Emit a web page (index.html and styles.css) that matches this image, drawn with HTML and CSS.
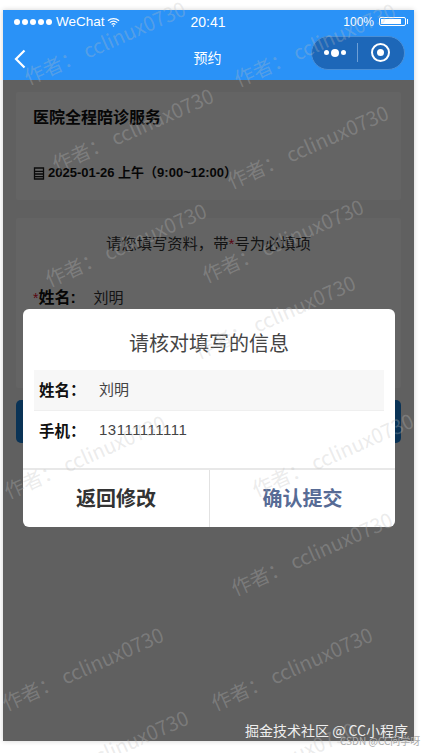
FILE: index.html
```html
<!DOCTYPE html>
<html lang="zh">
<head>
<meta charset="utf-8">
<title>预约</title>
<link rel="stylesheet" href="styles.css">
</head>
<body>
<div class="stage">
  <div class="phone">
    <div class="header">
      <div class="status">
        <div class="status-left">
          <span class="dots"><i></i><i></i><i></i><i></i><i></i></span>
          <span>WeChat</span>
          <svg class="wifi" viewBox="0 0 14 10" width="13" height="10"><path d="M1 3.600C4.400.6 9.600.6 13 3.600M3 5.700c2.300-2 5.700-2 8 0M5 7.700c1.200-1 2.800-1 4 0" fill="none" stroke="#fff" stroke-width="1.300"/><circle cx="7" cy="9.200" r=".8" fill="#fff"/></svg>
        </div>
        <div class="status-time">20:41</div>
        <div class="status-right">
          <span>100%</span>
          <span class="battery"><b></b></span>
        </div>
      </div>
      <div class="nav">
        <svg class="back" viewBox="0 0 12 20" width="12" height="20"><path d="M10.500 1.500 2 10l8.500 8.500" fill="none" stroke="#fff" stroke-width="2.200"/></svg>
        <div class="nav-title">预约</div>
        <div class="capsule">
          <span class="more"><i></i><i class="mid"></i><i></i></span>
          <span class="cap-line"></span>
          <span class="target"><i></i></span>
        </div>
      </div>
    </div>
    <div class="content">
      <div class="card service">
        <div class="service-title">医院全程陪诊服务</div>
        <div class="service-date">
          <svg viewBox="0 0 12 13" width="12" height="13"><path d="M1.500 1h9v11h-9zM1.500 4.300h9M1.500 7h9M1.500 9.600h9" fill="none" stroke="#1a1a1a" stroke-width="1.300"/></svg>
          <span>2025-01-26 上午（9:00~12:00）</span>
        </div>
      </div>
      <div class="card form">
        <div class="form-tip">请您填写资料，带<em>*</em>号为必填项</div>
        <div class="form-row"><em>*</em><strong>姓名:</strong><span>刘明</span></div>
      </div>
      <div class="submit"></div>
      <div class="mask"></div>
      <div class="modal">
        <div class="modal-title">请核对填写的信息</div>
        <div class="modal-rows">
          <div class="modal-row shaded"><strong>姓名：</strong><span>刘明</span></div>
          <div class="modal-row"><strong>手机：</strong><span class="phone-num">13111111111</span></div>
        </div>
        <div class="modal-foot">
          <div class="modal-btn">返回修改</div>
          <div class="modal-btn ok">确认提交</div>
        </div>
      </div>
    </div>
  </div>
  <div class="wm w1">作者： cclinux0730</div>
  <div class="wm w2">作者： cclinux0730</div>
  <div class="wm w3">作者： cclinux0730</div>
  <div class="wm w4">作者： cclinux0730</div>
  <div class="wm w5">作者： cclinux0730</div>
  <div class="wm w6">作者： cclinux0730</div>
  <div class="wm w7">作者： cclinux0730</div>
  <div class="wm w8">作者： cclinux0730</div>
  <div class="wm w9">作者： cclinux0730</div>
  <div class="wm w10">作者： cclinux0730</div>
  <div class="wm w11">作者： cclinux0730</div>
  <div class="wm w12">作者： cclinux0730</div>
  <div class="wm w13">作者： cclinux0730</div>
  <div class="wm w14">作者： cclinux0730</div>
  <div class="credit">掘金技术社区 @ CC小程序</div>
  <div class="credit2">CSDN @CC问学呀</div>
</div>
</body>
</html>
```
FILE: styles.css
```css
* { box-sizing: border-box; }
html, body { margin: 0; padding: 0; background: #fff; }
body { font-family: "Liberation Sans", "Noto Sans CJK SC", sans-serif; }
.stage { position: relative; width: 423px; height: 753px; overflow: hidden; padding: 10px 9px 12px 3px; }
.phone { width: 411px; height: 731px; display: flex; flex-direction: column; box-shadow: 0 0 5px rgba(0,0,0,.18); }

.header { height: 70px; background: #2a92f7; color: #fff; flex: none; }
.status { height: 22px; display: grid; grid-template-columns: 1fr auto 1fr; align-items: center; padding: 1px 8px 0 11px; font-size: 13.500px; }
.status-left { display: flex; align-items: center; gap: 2px; }
.dots { display: flex; gap: 2px; margin-right: 2px; }
.dots i { width: 6px; height: 6px; border-radius: 50%; background: #fff; }
.status-time { font-size: 14px; padding-right: 4px; }
.status-right { display: flex; justify-content: flex-end; align-items: center; gap: 5px; font-size: 12px; }
.battery { width: 27px; height: 9px; border: 1px solid #fff; border-radius: 2px; padding: 1px; position: relative; }
.battery b { display: block; height: 100%; width: 85%; background: #fff; }
.battery::after { content: ""; position: absolute; right: -3px; top: 1px; width: 1px; height: 5px; background: #fff; }
.nav { height: 48px; display: grid; grid-template-columns: 1fr auto 1fr; align-items: center; padding: 0 9px 0 11px; }
.back { display: block; margin-top: 5px; }
.nav-title { font-size: 14px; padding-top: 2px; padding-right: 4px; }
.capsule { justify-self: end; width: 94px; height: 34px; border-radius: 17px; background: #1d67b8; border: 1px solid #4a8fd6; display: flex; align-items: center; margin-top: -7px; }
.more { display: flex; align-items: center; gap: 2px; width: 45px; justify-content: center; }
.more i { width: 5px; height: 5px; border-radius: 50%; background: #fff; }
.more i.mid { width: 8px; height: 8px; }
.cap-line { width: 1px; height: 19px; background: #6d9fd6; }
.target { width: 19px; height: 19px; border: 2px solid #fff; border-radius: 50%; margin-left: 13px; display: flex; align-items: center; justify-content: center; }
.target i { width: 7px; height: 7px; border-radius: 50%; background: #fff; }

.content { position: relative; flex: 1; background: #f1f1f1; padding: 12px 13px 0; }
.card { background: #fafafa; border-radius: 3px; }
.service { height: 108px; padding: 15px 17px 0; color: #111; }
.service-title { font-size: 16px; font-weight: 700; line-height: 22px; }
.service-date { display: flex; align-items: center; gap: 3px; margin-top: 35px; font-size: 13px; font-weight: 700; line-height: 18px; }
.service-date svg { flex: none; }
.form { height: 170px; margin-top: 18px; padding: 16px 17px 0; }
.form-tip { text-align: center; font-size: 15.300px; line-height: 20px; color: #333; }
.form-tip em, .form-row em { font-style: normal; color: #e01030; }
.form-row { margin-top: 33px; display: flex; align-items: baseline; font-size: 16px; color: #333; line-height: 22px; }
.form-row em { font-size: 14px; }
.form-row strong { color: #111; width: 55px; }
.form-row span { font-size: 15px; }
.submit { height: 43px; margin-top: 12px; background: #1a7fd8; border-radius: 5px; }

.mask { position: absolute; inset: 0; background: rgba(0,0,0,.6); }
.modal { position: absolute; left: 20px; top: 229px; width: 372px; height: 218px; background: #fff; border-radius: 6px; display: flex; flex-direction: column; }
.modal-title { height: 61px; display: flex; align-items: center; justify-content: center; font-size: 20px; color: #444; padding-top: 6px; }
.modal-rows { margin: 0 11px; height: 98px; }
.modal-row { height: 40px; display: flex; align-items: center; padding: 0 0 3px 5px; font-size: 15px; color: #444; }
.modal-row.shaded { height: 41px; background: #f7f7f7; border-bottom: 1px solid #efefef; }
.modal-row strong { width: 60px; color: #111; font-size: 15.500px; }
.phone-num { letter-spacing: .5px; }
.modal-foot { flex: 1; display: grid; grid-template-columns: 186px 1fr; border-top: 2px solid #e8e8e8; }
.modal-btn { display: flex; align-items: center; justify-content: center; font-size: 20px; font-weight: 700; color: #333; padding-bottom: 2px; }
.modal-btn.ok { color: #576b95; border-left: 1px solid #e2e2e2; }

.wm { position: absolute; font-family: "Noto Sans CJK SC", sans-serif; font-size: 20px; line-height: 24px; white-space: nowrap; color: rgba(190,190,190,.3); transform-origin: left center; transform: rotate(-24deg); pointer-events: none; }
.w1 { left: 25px; top: 66px; }
.w2 { left: 235px; top: 68px; }
.w3 { left: 53px; top: 153px; }
.w4 { left: 228px; top: 170px; }
.w5 { left: 46px; top: 268px; }
.w6 { left: 203px; top: 264px; }
.w7 { left: 195px; top: 340px; }
.w8 { left: 5px; top: 480px; }
.w9 { left: 253px; top: 478px; }
.w10 { left: 232px; top: 577px; }
.w11 { left: 3px; top: 692px; }
.w12 { left: 212px; top: 692px; }
.w13 { left: 28px; top: 775px; }
.w14 { left: 195px; top: 787px; }
.credit { position: absolute; left: 245px; top: 721px; font-family: "Noto Sans CJK SC", sans-serif; font-size: 14px; line-height: 18px; color: #eee; white-space: nowrap; }
.credit2 { position: absolute; left: 340px; top: 734px; font-family: "Noto Sans CJK SC", sans-serif; font-size: 10px; line-height: 13px; color: #aaa; white-space: nowrap; }
```
